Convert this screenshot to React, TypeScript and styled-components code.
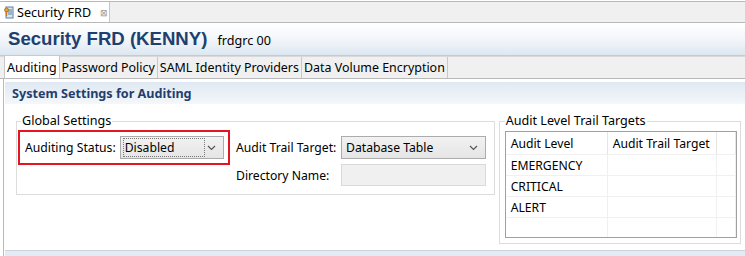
import styled, { createGlobalStyle } from 'styled-components';

const GlobalStyle = createGlobalStyle`
  html, body {
    margin: 0;
    padding: 0;
    background: #ffffff;
    font-family: 'Noto Sans', 'Open Sans', sans-serif;
    font-size: 12.2px;
    color: #000;
    overflow: hidden;
  }
`;

const Page = styled.div`
  width: 745px;
  height: 256px;
  display: flex;
  flex-direction: column;
  background: #fff;
  overflow: hidden;
`;

const EditorTabBar = styled.div`
  height: 20px;
  margin-top: 1px;
  border-top: 1px solid #b9b9b9;
  border-bottom: 1px solid #b9b9b9;
  background: #f0f0f0;
  display: flex;
`;

const EditorTab = styled.div`
  width: 105px;
  background: #fff;
  border-right: 1px solid #c6c6c6;
  display: flex;
  align-items: center;
  gap: 3px;
  padding-left: 4px;
  font-size: 12.6px;
  white-space: nowrap;
`;

const CloseMark = styled.span`
  margin-left: 6px;
  font-size: 9px;
  color: #999;
`;

const Header = styled.div`
  height: 32px;
  background: linear-gradient(#ffffff, #f3f6fa 50%, #dde7f1);
  border-bottom: 1px solid #c3ccd6;
  display: flex;
  align-items: center;
  padding-left: 8px;
  gap: 10px;
`;

const Title = styled.span`
  font-family: 'Liberation Sans', Arial, sans-serif;
  font-weight: bold;
  font-size: 18.6px;
  color: #203f6e;
`;

const SubTitle = styled.span`
  font-size: 12.6px;
  padding-top: 3px;
`;

const TabRow = styled.div`
  height: 21px;
  background: #f0f0f0;
  border-top: 1px solid #d9d9d9;
  border-bottom: 1px solid #b9b9b9;
  display: flex;
  padding-left: 4px;
`;

const Tab = styled.div<{ $active?: boolean }>`
  height: ${(p) => (p.$active ? '22px' : '21px')};
  padding: 0 2px 0 2px;
  margin-top: ${(p) => (p.$active ? '-1px' : '0')};
  background: ${(p) => (p.$active ? '#fff' : '#f0f0f0')};
  border-right: 1px solid #c8c8c8;
  border-left: ${(p) => (p.$active ? '1px solid #c8c8c8' : 'none')};
  display: flex;
  align-items: center;
  font-size: 12.45px;
  white-space: nowrap;
`;

const Body = styled.div`
  flex: 1;
  margin-left: 3px;
  border-left: 1px solid #b9b9b9;
  display: flex;
  flex-direction: column;
  padding-top: 3px;
`;

const SectionHeader = styled.div`
  height: 22px;
  margin-left: 1px;
  background: linear-gradient(#dfe8f2, #f4f7fb);
  display: flex;
  align-items: center;
  padding-left: 7px;
  font-weight: bold;
  font-size: 12.6px;
  color: #203f6e;
`;

const Groups = styled.div`
  display: flex;
  gap: 4px;
  padding: 10px 4px 0 12px;
  align-items: flex-start;
`;

const Group = styled.fieldset<{ $w: number; $h: number; $pad: string }>`
  width: ${(p) => p.$w}px;
  height: ${(p) => p.$h}px;
  box-sizing: border-box;
  margin: 0;
  border: 1px solid #dcdcdc;
  padding: ${(p) => p.$pad};
  min-width: 0;
`;

const Legend = styled.legend<{ $indent: number }>`
  padding: 0 1px;
  margin-left: ${(p) => p.$indent}px;
  font-size: 12.6px;
  line-height: 14px;
`;

const FormGrid = styled.div`
  display: flex;
  gap: 6px;
  padding-top: 2px;
`;

const Highlight = styled.div`
  border: 2px solid #e3151e;
  padding: 0 4px 0 5px;
  box-sizing: border-box;
  width: 212px;
  height: 35px;
  display: flex;
  align-items: center;
  gap: 4px;
`;

const RightFields = styled.div`
  display: grid;
  grid-template-columns: 105px 145px;
  row-gap: 5px;
  padding-top: 6px;
  align-items: center;
`;

const Label = styled.span`
  white-space: nowrap;
`;

const Combo = styled.div<{ $w: number }>`
  width: ${(p) => p.$w}px;
  height: 23px;
  box-sizing: border-box;
  border: 1px solid #acacac;
  background: linear-gradient(#f2f2f2, #e5e5e5);
  display: flex;
  align-items: center;
`;

const ComboText = styled.span<{ $boxed?: boolean }>`
  flex: 1;
  margin: 2px;
  padding-left: 1px;
  height: 17px;
  line-height: 17px;
  border: ${(p) => (p.$boxed ? '1px dotted #7a7a7a' : '1px solid transparent')};
  white-space: nowrap;
`;

const Arrow = styled.svg`
  width: 9px;
  height: 6px;
  margin-right: 7px;
`;

const TextBox = styled.div`
  width: 145px;
  height: 22px;
  box-sizing: border-box;
  border: 1px solid #d9d9d9;
  background: #f0f0f0;
`;

const Table = styled.div`
  margin-top: 3px;
  height: 107px;
  border: 1px solid #a0a0a0;
  box-sizing: border-box;
  display: grid;
  grid-template-columns: 102px 109px 1fr;
  grid-template-rows: 23px repeat(4, 21px);
  overflow: hidden;
`;

const HeadCell = styled.div`
  padding-left: 5px;
  display: flex;
  align-items: center;
  white-space: nowrap;
  border-right: 1px solid #e5e5e5;
  border-bottom: 1px solid #f0f0f0;
`;

const Cell = styled.div`
  padding-left: 5px;
  display: flex;
  align-items: center;
  white-space: nowrap;
  border-right: 1px solid #f0f0f0;
  border-bottom: 1px solid #f0f0f0;
`;

const Footer = styled.div`
  margin-top: auto;
  height: 5px;
  margin-left: 1px;
  border-top: 1px solid #c9d3de;
  background: #e3ebf4;
`;

const ChevronDown = () => (
  <Arrow viewBox="0 0 9 6">
    <path d="M1 1 L4.5 4.5 L8 1" fill="none" stroke="#555" strokeWidth="1.2" />
  </Arrow>
);

const EditorIcon = () => (
  <svg width="10" height="13" viewBox="0 0 10 13">
    <rect x="2" y="1" width="7" height="11" fill="#d9e6f2" stroke="#5b7fa6" />
    <line x1="4" y1="4" x2="8" y2="4" stroke="#5b7fa6" />
    <line x1="4" y1="6" x2="8" y2="6" stroke="#5b7fa6" />
    <line x1="4" y1="8" x2="8" y2="8" stroke="#5b7fa6" />
    <circle cx="2.5" cy="4" r="2" fill="#e8a33a" stroke="#a86d12" strokeWidth="0.8" />
    <rect x="2" y="5" width="1.2" height="5" fill="#c07d1a" />
  </svg>
);

const tabs = ['Auditing', 'Password Policy', 'SAML Identity Providers', 'Data Volume Encryption'];
const levels = ['EMERGENCY', 'CRITICAL', 'ALERT', ''];

export default function App() {
  return (
    <Page>
      <GlobalStyle />
      <EditorTabBar>
        <EditorTab>
          <EditorIcon />
          Security FRD
          <CloseMark>⊠</CloseMark>
        </EditorTab>
      </EditorTabBar>
      <Header>
        <Title>Security FRD (KENNY)</Title>
        <SubTitle>frdgrc 00</SubTitle>
      </Header>
      <TabRow>
        {tabs.map((t, i) => (
          <Tab key={t} $active={i === 0}>
            {t}
          </Tab>
        ))}
      </TabRow>
      <Body>
        <SectionHeader>System Settings for Auditing</SectionHeader>
        <Groups>
          <Group $w={480} $h={81} $pad="0 2px 0 1px">
            <Legend $indent={3}>Global Settings</Legend>
            <FormGrid>
              <Highlight>
                <Label>Auditing Status:</Label>
                <Combo $w={104}>
                  <ComboText $boxed>Disabled</ComboText>
                  <ChevronDown />
                </Combo>
              </Highlight>
              <RightFields>
                <Label>Audit Trail Target:</Label>
                <Combo $w={145}>
                  <ComboText>Database Table</ComboText>
                  <ChevronDown />
                </Combo>
                <Label>Directory Name:</Label>
                <TextBox />
              </RightFields>
            </FormGrid>
          </Group>
          <Group $w={243} $h={130} $pad="0 3px 0 5px">
            <Legend $indent={0}>Audit Level Trail Targets</Legend>
            <Table>
              <HeadCell>Audit Level</HeadCell>
              <HeadCell>Audit Trail Target</HeadCell>
              <HeadCell />
              {levels.map((l, i) => [
                <Cell key={`a${i}`}>{l}</Cell>,
                <Cell key={`b${i}`} />,
                <Cell key={`c${i}`} />,
              ])}
            </Table>
          </Group>
        </Groups>
        <Footer />
      </Body>
    </Page>
  );
}
